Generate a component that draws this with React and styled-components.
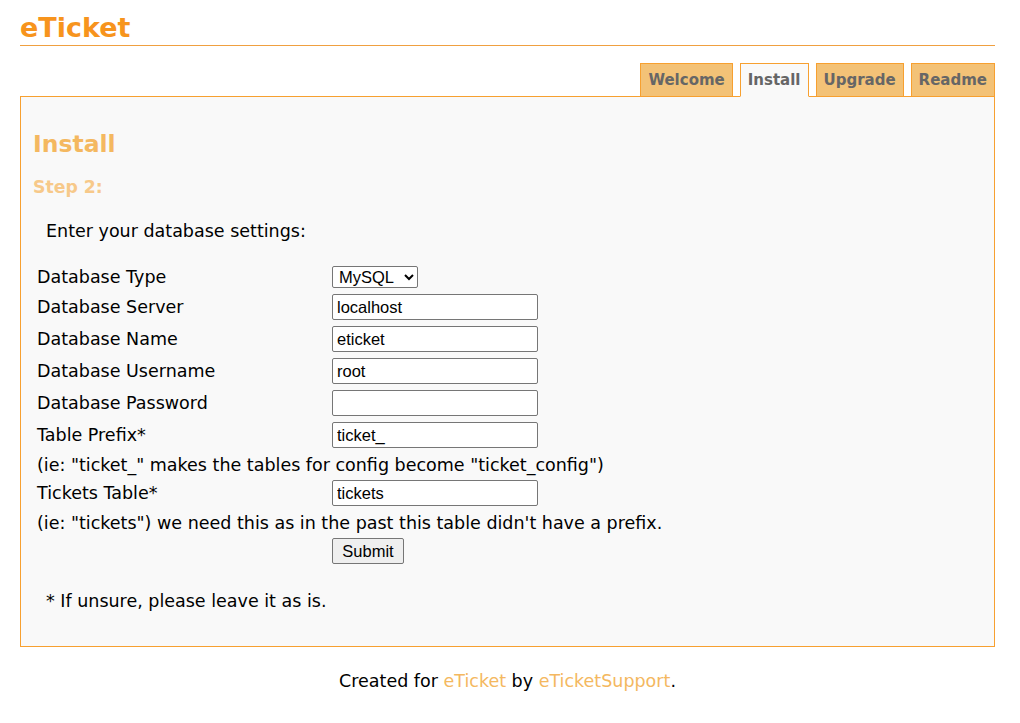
import React from 'react'
import styled, { createGlobalStyle } from 'styled-components'

const GlobalStyle = createGlobalStyle`
  body {
    margin: 0;
    background: #fff;
    font-family: "DejaVu Sans", Verdana, sans-serif;
    color: #000;
  }
`

const Page = styled.div`
  padding: 11px 25px 0 20px;
`

const Title = styled.h1`
  margin: 0;
  font-size: 27px;
  font-weight: bold;
  color: #f7941d;
  line-height: 34px;
  border-bottom: 1px solid #f0a040;
`

const Tabs = styled.div`
  display: flex;
  justify-content: flex-end;
  gap: 7px;
  margin-top: 17px;
  margin-bottom: -1px;
`

const Tab = styled.a`
  display: block;
  padding: 0 7px;
  height: 32px;
  line-height: 33px;
  font-size: 15px;
  font-weight: bold;
  color: #666;
  text-decoration: none;
  background: ${p => (p.active ? '#f9f9f9' : '#f3c277')};
  border: 1px solid #f7a030;
  border-bottom-color: ${p => (p.active ? '#f9f9f9' : '#f7a030')};
  position: relative;
  z-index: 1;
`

const Box = styled.div`
  background: #f9f9f9;
  border: 1px solid #f7a030;
  padding: 32px 12px 34px 12px;
`

const Heading = styled.h2`
  margin: 0;
  font-size: 23.5px;
  color: #f4b860;
  line-height: 30px;
`

const Step = styled.h3`
  margin: 17px 0 0;
  font-size: 17.3px;
  color: #f7c98a;
  line-height: 22px;
`

const Text = styled.p`
  margin: ${p => p.mt || 0}px 0 0;
  padding-left: 13px;
  font-size: 17.5px;
  line-height: 22px;
`

const Form = styled.table`
  margin-top: 20px;
  border-collapse: separate;
  border-spacing: 2px;
  font-size: 17.5px;
`

const Label = styled.td`
  width: 289px;
  padding: 2px;
  line-height: 22px;
  vertical-align: middle;
`

const Cell = styled.td`
  padding: 2px;
  line-height: 22px;
`

const Note = styled.td`
  padding: 2px 2px 0;
  line-height: 22px;
  white-space: nowrap;
`

const Input = styled.input`
  width: 206px;
  height: 26px;
  box-sizing: border-box;
  border: 1px solid #767676;
  border-radius: 2px;
  font-family: "Liberation Sans", Arial, sans-serif;
  font-size: 16.5px;
  padding: 0 4px;
  background: #fff;
  display: block;
`

const Select = styled.select`
  width: 86px;
  height: 22px;
  font-family: "Liberation Sans", Arial, sans-serif;
  font-size: 16.5px;
  border: 1px solid #767676;
  border-radius: 2px;
  background: #fff;
  padding: 0 2px;
  display: block;
`

const Button = styled.button`
  height: 26px;
  width: 72px;
  padding: 0;
  font-family: "Liberation Sans", Arial, sans-serif;
  font-size: 16.5px;
  background: #efefef;
  border: 1px solid #767676;
  border-radius: 2px;
  display: block;
`

const Footer = styled.p`
  text-align: center;
  font-size: 17.5px;
  margin: 23px 0 0;
  line-height: 22px;
`

const Link = styled.a`
  color: #f4b860;
  text-decoration: none;
`

const fields = [
  { label: 'Database Server', value: 'localhost' },
  { label: 'Database Name', value: 'eticket' },
  { label: 'Database Username', value: 'root' },
  { label: 'Database Password', value: '', type: 'password' },
]

const App = () => {
  return (
    <Page>
      <GlobalStyle />
      <Title>eTicket</Title>
      <Tabs>
        <Tab>Welcome</Tab>
        <Tab active>Install</Tab>
        <Tab>Upgrade</Tab>
        <Tab>Readme</Tab>
      </Tabs>
      <Box>
        <Heading>Install</Heading>
        <Step>Step 2:</Step>
        <Text mt={22}>Enter your database settings:</Text>
        <Form>
          <tbody>
            <tr>
              <Label>Database Type</Label>
              <Cell>
                <Select defaultValue="mysql">
                  <option value="mysql">MySQL</option>
                </Select>
              </Cell>
            </tr>
            {fields.map(f => (
              <tr key={f.label}>
                <Label>{f.label}</Label>
                <Cell>
                  <Input type={f.type || 'text'} defaultValue={f.value} />
                </Cell>
              </tr>
            ))}
            <tr>
              <Label>Table Prefix*</Label>
              <Cell><Input defaultValue="ticket_" /></Cell>
            </tr>
            <tr>
              <Note colSpan={2}>(ie: "ticket_" makes the tables for config become "ticket_config")</Note>
            </tr>
            <tr>
              <Label>Tickets Table*</Label>
              <Cell><Input defaultValue="tickets" /></Cell>
            </tr>
            <tr>
              <Note colSpan={2}>(ie: "tickets") we need this as in the past this table didn't have a prefix.</Note>
            </tr>
            <tr>
              <Cell />
              <Cell><Button>Submit</Button></Cell>
            </tr>
          </tbody>
        </Form>
        <Text mt={22}>* If unsure, please leave it as is.</Text>
      </Box>
      <Footer>
        Created for <Link>eTicket</Link> by <Link>eTicketSupport</Link>.
      </Footer>
    </Page>
  )
}

export default App
